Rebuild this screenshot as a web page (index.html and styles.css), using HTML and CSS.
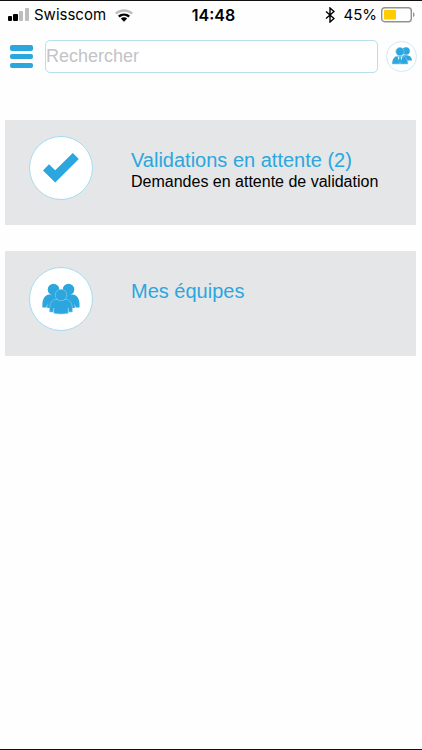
FILE: index.html
```html
<!DOCTYPE html>
<html lang="fr">
<head>
    <meta charset="UTF-8">
    <meta name="viewport" content="width=device-width, initial-scale=1.0">
    <title>Validations</title>
    <link rel="stylesheet" href="styles.css">
</head>
<body>
    <div class="status-bar">
        <div class="status-left">
            <svg class="signal" width="22" height="14" viewBox="0 0 22 14" aria-hidden="true">
                <rect x="0" y="8" width="4" height="5" rx="1"/>
                <rect x="5" y="6" width="5" height="7" rx="1"/>
                <rect class="off" x="11" y="3" width="4" height="10" rx="1"/>
                <rect class="off" x="17" y="0" width="4" height="13" rx="1"/>
            </svg>
            <span>Swisscom</span>
            <svg class="wifi" width="18" height="13" viewBox="0 0 18 13" aria-hidden="true">
                <path class="off" d="M0 3.8C5 -1.1 13 -1.1 18 3.8L16.3 5.5C12.2 1.7 5.8 1.7 1.7 5.5Z"/>
                <path d="M3 6.8C6.3 3.6 11.7 3.6 15 6.8L13.3 8.5C10.8 6.2 7.2 6.2 4.7 8.5Z"/>
                <path d="M5.8 9.6C7.6 7.9 10.4 7.9 12.2 9.6L9 12.8Z"/>
            </svg>
        </div>
        <div class="clock">14:48</div>
        <div class="status-right">
            <svg class="bluetooth" width="10" height="16" viewBox="0 0 10 16" aria-hidden="true">
                <path d="M1 4.5L9 11.5L5 15V1L9 4.5L1 11.5"/>
            </svg>
            <span>45%</span>
            <svg class="battery" width="34" height="16" viewBox="0 0 34 16" aria-hidden="true">
                <rect class="case" x="0.7" y="0.7" width="29.6" height="14" rx="3"/>
                <rect class="charge" x="3" y="3" width="12" height="9.4" rx="1"/>
                <path class="tip" d="M32 5.3C34 6 34 9.4 32 10.1Z"/>
            </svg>
        </div>
    </div>

    <header class="toolbar">
        <button class="menu-button" type="button" aria-label="Menu">
            <svg width="24" height="24" viewBox="0 0 24 24">
                <rect x="0" y="0" width="23" height="6" rx="2"/>
                <rect x="0" y="9" width="23" height="5" rx="2"/>
                <rect x="0" y="18" width="23" height="5" rx="2"/>
            </svg>
        </button>
        <input class="search" type="text" placeholder="Rechercher" aria-label="Rechercher">
        <button class="team-button" type="button" aria-label="Collaborateurs">
            <svg width="20" height="20" viewBox="0 0 20 20">
                <circle cx="14" cy="4" r="3.8"/>
                <path d="M11 8.3H15C18 8.3 19.6 10.5 20 13.4H11Z"/>
                <circle class="outlined" cx="8" cy="4.6" r="4.2"/>
                <path class="outlined" d="M0 17C0.4 12 2.4 9.2 5 9.2H11C13.6 9.2 15.6 12 16 17Z"/>
                <path class="shirt" d="M5.6 9.4L8 17L10.4 9.4L8.7 10.3L9.1 14L8 16L6.9 14L7.3 10.3Z"/>
            </svg>
        </button>
    </header>

    <main class="card-list">
        <a class="card" href="#">
            <span class="card-icon">
                <svg width="38" height="32" viewBox="0 0 38 32" aria-hidden="true">
                    <path d="M1 18.5L7 12.3L13.2 18.3L30.8 1L36.8 7L13.2 30.6Z"/>
                </svg>
            </span>
            <span class="card-text">
                <span class="card-title">Validations en attente (2)</span>
                <span class="card-subtitle">Demandes en attente de validation</span>
            </span>
        </a>
        <a class="card" href="#">
            <span class="card-icon">
                <svg width="38" height="32" viewBox="0 0 38 32" aria-hidden="true">
                    <g id="person">
                        <circle cx="11.5" cy="6.5" r="5.8"/>
                        <path d="M7 11.5H16L20 25H5.2V20.5L4.5 24.5H0.5C0 18 1.5 12.5 7 11.5Z"/>
                    </g>
                    <use href="#person" transform="translate(38 0) scale(-1 1)"/>
                    <path class="outlined" d="M13 16.5H25C29 17.5 31 22 30.3 29H26.8L26.2 25V30.3C22 31.3 16 31.3 11.8 30.3V25L11.2 29H7.7C7 22 9 17.5 13 16.5Z"/>
                    <circle class="outlined" cx="19" cy="12" r="5.8"/>
                </svg>
            </span>
            <span class="card-text">
                <span class="card-title">Mes équipes</span>
            </span>
        </a>
    </main>
</body>
</html>
```
FILE: styles.css
```css
* {
    box-sizing: border-box;
}
body {
    margin: 0;
    min-height: 100vh;
    border-top: 1px solid #111;
    border-bottom: 1px solid #111;
    background: #fefefe;
    color: #000;
    font-family: "Liberation Sans", Arial, sans-serif;
}
svg {
    display: block;
    flex: none;
}
.status-bar {
    display: grid;
    grid-template-columns: 1fr auto 1fr;
    align-items: center;
    height: 28px;
    padding: 0 7px 0 8px;
    font-family: Inter, sans-serif;
    font-size: 15px;
    line-height: 20px;
}
.status-left,
.status-right {
    display: flex;
    align-items: center;
}
.status-left {
    gap: 4px;
}
.status-right {
    justify-content: flex-end;
    gap: 4px;
}
.wifi {
    margin-left: 5px;
}
.off {
    fill: #bdbdbd;
}
.clock {
    padding-left: 4px;
    font-size: 16px;
    font-weight: 600;
}
.bluetooth {
    margin-right: 4px;
    fill: none;
    stroke: #000;
    stroke-width: 1.4;
}
.case {
    fill: none;
    stroke: #929292;
    stroke-width: 1.4;
}
.charge {
    fill: #fc0;
}
.tip {
    fill: #929292;
}
.toolbar {
    display: flex;
    align-items: center;
    padding: 11px 5px 0;
}
.menu-button,
.team-button {
    flex: none;
    padding: 0;
    background: none;
    border: none;
    cursor: pointer;
}
.menu-button {
    width: 40px;
    padding-left: 5px;
}
.search {
    flex: 1;
    min-width: 0;
    height: 33px;
    margin-right: 8px;
    padding: 0;
    border: 1px solid #b9dfea;
    border-radius: 5px;
    background: #fff;
    font-family: inherit;
    font-size: 18px;
}
.search::placeholder {
    color: #c3c3c8;
}
.team-button {
    display: flex;
    align-items: center;
    justify-content: center;
    width: 31px;
    height: 31px;
    border: 1px solid #cfeaf6;
    border-radius: 50%;
    background: #fff;
}
.menu-button svg,
.team-button svg,
.card-icon svg {
    fill: #2ba6de;
}
.outlined {
    stroke: #8fd0ee;
    stroke-width: 0.6;
}
.shirt {
    fill: #fff;
}
.card-list {
    display: flex;
    flex-direction: column;
    gap: 26px;
    padding: 47px 6px 20px 5px;
}
.card {
    display: flex;
    gap: 38px;
    min-height: 105px;
    padding: 16px 24px;
    background: #e5e6e8;
    color: #000;
    text-decoration: none;
}
.card-icon {
    display: flex;
    flex: none;
    align-items: center;
    justify-content: center;
    width: 64px;
    height: 64px;
    border: 1px solid #a6dcf1;
    border-radius: 50%;
    background: #fff;
}
.card-text {
    display: flex;
    flex-direction: column;
    padding-top: 13px;
}
.card-title {
    color: #2ba6de;
    font-size: 20px;
    line-height: 23px;
}
.card-subtitle {
    font-size: 16px;
    line-height: 20px;
}
```
